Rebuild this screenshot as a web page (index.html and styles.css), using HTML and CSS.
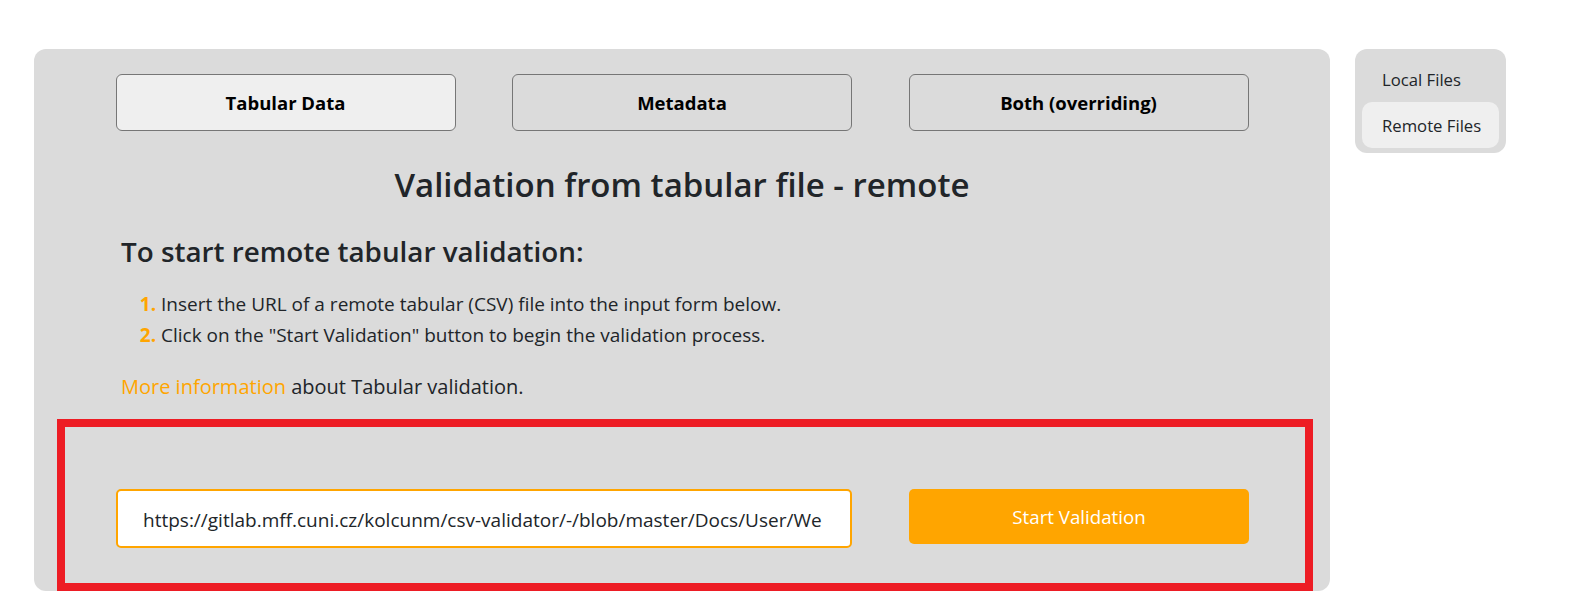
FILE: index.html
```html
<!DOCTYPE html>
<html lang="en">
<head>
<meta charset="utf-8">
<title>Validation from tabular file - remote</title>
<link rel="stylesheet" href="styles.css">
</head>
<body>
<div class="page">
  <main class="panel">
    <nav class="tabs">
      <button class="tab tab-active">Tabular Data</button>
      <button class="tab">Metadata</button>
      <button class="tab">Both (overriding)</button>
    </nav>
    <h1 class="title">Validation from tabular file - remote</h1>
    <section class="intro">
      <h2 class="subtitle">To start remote tabular validation:</h2>
      <ol class="steps">
        <li>Insert the URL of a remote tabular (CSV) file into the input form below.</li>
        <li>Click on the "Start Validation" button to begin the validation process.</li>
      </ol>
      <p class="more"><a class="more-link" href="#">More information</a> about Tabular validation.</p>
    </section>
    <section class="form-box">
      <form class="form-row">
        <input class="url-input" type="text" value="https://gitlab.mff.cuni.cz/kolcunm/csv-validator/-/blob/master/Docs/User/We">
        <button class="start-btn" type="button">Start Validation</button>
      </form>
    </section>
  </main>
  <aside class="side">
    <a class="side-item" href="#">Local Files</a>
    <a class="side-item side-active" href="#">Remote Files</a>
  </aside>
</div>
</body>
</html>
```
FILE: styles.css
```css
html, body {
  margin: 0;
  padding: 0;
  background: #ffffff;
}
body {
  font-family: "Open Sans", "Noto Sans", sans-serif;
  color: #212529;
}
.page {
  display: flex;
  align-items: flex-start;
  padding: 49px 0 0 34px;
}
.panel {
  width: 1296px;
  height: 542px;
  box-sizing: border-box;
  background: #dbdbdb;
  border-radius: 12px;
  padding-top: 25px;
  display: flex;
  flex-direction: column;
}
.tabs {
  width: 1133px;
  margin: 0 auto;
  display: grid;
  grid-template-columns: repeat(3, 1fr);
  column-gap: 56.5px;
}
.tab {
  height: 57px;
  border: 1px solid #767676;
  border-radius: 6px;
  background: transparent;
  font-family: "Open Sans", "Noto Sans", sans-serif;
  font-weight: 700;
  font-size: 18.5px;
  color: #000;
  padding: 0;
}
.tab-active {
  background: #efefef;
}
.title {
  margin: 35px 0 0;
  text-align: center;
  font-size: 33px;
  line-height: 38px;
  font-weight: 600;
}
.intro {
  padding-left: 87px;
}
.subtitle {
  margin: 32px 0 0;
  font-size: 27.8px;
  line-height: 31px;
  font-weight: 600;
}
.steps {
  margin: 22px 0 0;
  padding-left: 40px;
  font-size: 19px;
  line-height: 31px;
}
.steps li::marker {
  color: #ffa500;
  font-weight: 700;
}
.more {
  margin: 21px 0 0;
  font-size: 20px;
  line-height: 30px;
}
.more-link {
  color: #ffa500;
  text-decoration: none;
}
.form-box {
  margin: 16.5px 17px 0 23px;
  flex: 1;
  border: 8px solid #ed1c24;
  padding: 62px 0 0 51px;
}
.form-row {
  width: 1133px;
  display: grid;
  grid-template-columns: 1fr 340px;
  column-gap: 57px;
  align-items: start;
}
.url-input {
  height: 59px;
  box-sizing: border-box;
  border: 2px solid #ffa500;
  border-radius: 5px;
  background: #fff;
  padding: 4px 25px 0;
  font-family: "Open Sans", "Noto Sans", sans-serif;
  font-size: 19px;
  color: #212529;
  outline: none;
}
.start-btn {
  height: 55px;
  border: none;
  border-radius: 5px;
  background: #ffa500;
  color: #fff;
  font-family: "Open Sans", "Noto Sans", sans-serif;
  font-size: 18.7px;
  padding: 0;
}
.side {
  margin-left: 25px;
  width: 151px;
  box-sizing: border-box;
  background: #dbdbdb;
  border-radius: 12px;
  padding: 7px 7px 5px;
  display: flex;
  flex-direction: column;
}
.side-item {
  display: flex;
  align-items: center;
  height: 46px;
  padding-left: 20px;
  border-radius: 10px;
  font-size: 16.7px;
  color: #212529;
  text-decoration: none;
}
.side-active {
  background: #efefef;
}
```
